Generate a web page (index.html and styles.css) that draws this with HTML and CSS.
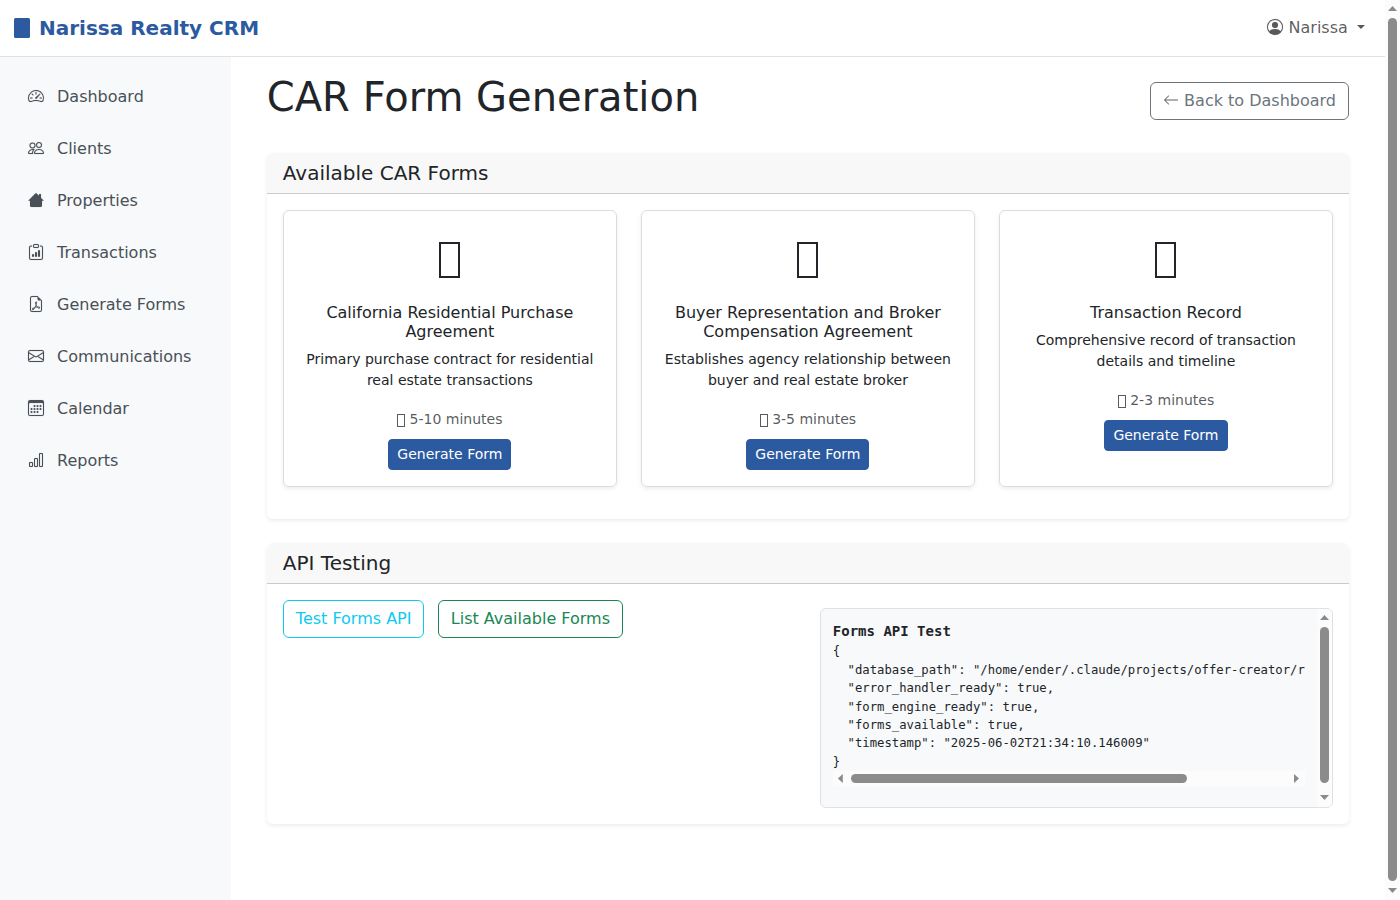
FILE: index.html
```html
<!DOCTYPE html>
<html lang="en">
<head>
<meta charset="utf-8">
<title>CAR Form Generation</title>
<link rel="stylesheet" href="styles.css">
</head>
<body>
<div class="page">
<nav class="navbar">
  <a class="brand"><span class="brand-mark"></span>Narissa Realty CRM</a>
  <a class="user">
    <svg class="bi" viewBox="0 0 16 16"><path d="M11 6a3 3 0 1 1-6 0 3 3 0 0 1 6 0"/><path fill-rule="evenodd" d="M0 8a8 8 0 1 1 16 0A8 8 0 0 1 0 8m8-7a7 7 0 0 0-5.468 11.37C3.242 11.226 4.805 10 8 10s4.757 1.225 5.468 2.37A7 7 0 0 0 8 1"/></svg>
    Narissa <span class="caret"></span>
  </a>
</nav>
<div class="layout">
  <aside class="sidebar">
    <a class="nav-link"><svg class="bi" viewBox="0 0 16 16"><path d="M8 4a.5.5 0 0 1 .5.5V6a.5.5 0 0 1-1 0V4.5A.5.5 0 0 1 8 4M3.732 5.732a.5.5 0 0 1 .707 0l.915.914a.5.5 0 1 1-.708.708l-.914-.915a.5.5 0 0 1 0-.707M2 10a.5.5 0 0 1 .5-.5h1.586a.5.5 0 0 1 0 1H2.5A.5.5 0 0 1 2 10m9.5 0a.5.5 0 0 1 .5-.5h1.5a.5.5 0 0 1 0 1H12a.5.5 0 0 1-.5-.5m.754-4.246a.39.39 0 0 0-.527-.02L7.547 9.31a.91.91 0 1 0 1.302 1.258l3.434-4.297a.39.39 0 0 0-.029-.518z"/><path fill-rule="evenodd" d="M0 10a8 8 0 1 1 15.547 2.661c-.442 1.253-1.845 1.602-2.932 1.25C11.309 13.488 9.475 13 8 13c-1.474 0-3.31.488-4.615.911-1.087.352-2.49.003-2.932-1.25A8 8 0 0 1 0 10m8-7a7 7 0 0 0-6.603 9.329c.203.575.923.876 1.68.63C4.397 12.533 6.358 12 8 12s3.604.532 4.923.96c.757.245 1.477-.056 1.68-.631A7 7 0 0 0 8 3"/></svg>Dashboard</a>
    <a class="nav-link"><svg class="bi" viewBox="0 0 16 16"><path d="M15 14s1 0 1-1-1-4-5-4-5 3-5 4 1 1 1 1zm-7.978-1L7 12.996c.001-.264.167-1.03.76-1.72C8.312 10.629 9.282 10 11 10c1.717 0 2.687.63 3.24 1.276.593.69.758 1.457.76 1.72l-.008.002-.014.002zM11 7a2 2 0 1 0 0-4 2 2 0 0 0 0 4m3-2a3 3 0 1 1-6 0 3 3 0 0 1 6 0M6.936 9.28a6 6 0 0 0-1.23-.247A7 7 0 0 0 5 9c-4 0-5 3-5 4q0 1 1 1h4.216A2.24 2.24 0 0 1 5 13c0-1.01.377-2.042 1.09-2.904.243-.294.526-.569.846-.816M4.92 10A5.5 5.5 0 0 0 4 13H1c0-.26.164-1.03.76-1.724.545-.636 1.492-1.256 3.16-1.275ZM1.5 5.5a3 3 0 1 1 6 0 3 3 0 0 1-6 0m3-2a2 2 0 1 0 0 4 2 2 0 0 0 0-4"/></svg>Clients</a>
    <a class="nav-link"><svg class="bi" viewBox="0 0 16 16"><path d="M8.707 1.5a1 1 0 0 0-1.414 0L.646 8.146a.5.5 0 0 0 .708.708L2 8.4v5.1A1.5 1.5 0 0 0 3.500 15h9a1.500 1.500 0 0 0 1.500-1.500V8.400l.646.454a.5.5 0 0 0 .708-.708L13 5.793V2.500a.5.5 0 0 0-.5-.5h-1a.5.5 0 0 0-.5.5v1.293z"/></svg>Properties</a>
    <a class="nav-link"><svg class="bi" viewBox="0 0 16 16"><path d="M4 11a1 1 0 1 1 2 0v1a1 1 0 1 1-2 0zm6-4a1 1 0 1 1 2 0v5a1 1 0 1 1-2 0zM7 9a1 1 0 0 1 2 0v3a1 1 0 1 1-2 0z"/><path d="M4 1.5H3a2 2 0 0 0-2 2V14a2 2 0 0 0 2 2h10a2 2 0 0 0 2-2V3.500a2 2 0 0 0-2-2h-1v1h1a1 1 0 0 1 1 1V14a1 1 0 0 1-1 1H3a1 1 0 0 1-1-1V3.500a1 1 0 0 1 1-1h1z"/><path d="M9.500 1a.5.5 0 0 1 .5.5v1a.5.5 0 0 1-.5.5h-3a.5.5 0 0 1-.5-.5v-1a.5.5 0 0 1 .5-.5zm-3-1A1.500 1.500 0 0 0 5 1.500v1A1.500 1.500 0 0 0 6.500 4h3A1.500 1.500 0 0 0 11 2.500v-1A1.500 1.500 0 0 0 9.500 0z"/></svg>Transactions</a>
    <a class="nav-link"><svg class="bi" viewBox="0 0 16 16"><path d="M14 14V4.500L9.500 0H4a2 2 0 0 0-2 2v12a2 2 0 0 0 2 2h8a2 2 0 0 0 2-2M9.500 3A1.500 1.500 0 0 0 11 4.500h2V14a1 1 0 0 1-1 1H4a1 1 0 0 1-1-1V2a1 1 0 0 1 1-1h5.500z"/><path d="M4.603 14.087a.8.8 0 0 1-.438-.420c-.195-.388-.130-.776.080-1.102.198-.307.526-.568.897-.787a7.700 7.700 0 0 1 1.482-.645 20 20 0 0 0 1.062-2.227 7.300 7.300 0 0 1-.430-1.295c-.086-.400-.119-.796-.046-1.136.075-.354.274-.672.650-.823.192-.077.400-.120.602-.077a.7.7 0 0 1 .477.365c.088.164.120.356.127.538.007.188-.012.396-.047.614-.084.510-.270 1.134-.520 1.794a11 11 0 0 0 .980 1.686 5.800 5.800 0 0 1 1.334.050c.364.066.734.195.960.465.120.144.193.320.200.518.007.192-.047.382-.138.563a1.040 1.040 0 0 1-.354.416.860.860 0 0 1-.510.138c-.331-.014-.654-.196-.933-.417a5.700 5.700 0 0 1-.911-.950 11.700 11.700 0 0 0-1.997.406 11.300 11.300 0 0 1-1.020 1.510c-.292.350-.609.656-.927.787a.8.8 0 0 1-.580.029m1.379-1.901q-.250.115-.459.238c-.328.194-.541.383-.647.547-.094.145-.096.250-.040.361q.016.032.026.044l.035-.012c.137-.056.355-.235.635-.572a8 8 0 0 0 .450-.606m1.640-1.330a13 13 0 0 1 1.010-.193 12 12 0 0 1-.510-.858 21 21 0 0 1-.500 1.050zm2.446.450q.226.245.435.410c.240.190.407.253.498.256a.100.100 0 0 0 .070-.015.300.300 0 0 0 .094-.125.440.440 0 0 0 .059-.200.100.100 0 0 0-.026-.063c-.052-.062-.200-.152-.518-.209a4 4 0 0 0-.612-.053zM8.078 7.800a7 7 0 0 0 .200-.828q.046-.282.038-.465a.600.600 0 0 0-.032-.198.500.500 0 0 0-.145.040c-.087.035-.158.106-.196.283-.040.192-.030.469.046.822q.036.167.090.346z"/></svg>Generate Forms</a>
    <a class="nav-link"><svg class="bi" viewBox="0 0 16 16"><path d="M0 4a2 2 0 0 1 2-2h12a2 2 0 0 1 2 2v8a2 2 0 0 1-2 2H2a2 2 0 0 1-2-2zm2-1a1 1 0 0 0-1 1v.217l7 4.200 7-4.200V4a1 1 0 0 0-1-1zm13 2.383-4.708 2.825L15 11.105zm-.034 6.876-5.640-3.471L8 9.583l-1.326-.795-5.640 3.470A1 1 0 0 0 2 13h12a1 1 0 0 0 .966-.741M1 11.105l4.708-2.897L1 5.383z"/></svg>Communications</a>
    <a class="nav-link"><svg class="bi" viewBox="0 0 16 16"><path d="M14 0H2a2 2 0 0 0-2 2v12a2 2 0 0 0 2 2h12a2 2 0 0 0 2-2V2a2 2 0 0 0-2-2M1 3.857C1 3.384 1.448 3 2 3h12c.552 0 1 .384 1 .857v10.286c0 .473-.448.857-1 .857H2c-.552 0-1-.384-1-.857z"/><path d="M6.500 7a1 1 0 1 0 0-2 1 1 0 0 0 0 2m3 0a1 1 0 1 0 0-2 1 1 0 0 0 0 2m3 0a1 1 0 1 0 0-2 1 1 0 0 0 0 2m-9 3a1 1 0 1 0 0-2 1 1 0 0 0 0 2m3 0a1 1 0 1 0 0-2 1 1 0 0 0 0 2m3 0a1 1 0 1 0 0-2 1 1 0 0 0 0 2m3 0a1 1 0 1 0 0-2 1 1 0 0 0 0 2m-9 3a1 1 0 1 0 0-2 1 1 0 0 0 0 2m3 0a1 1 0 1 0 0-2 1 1 0 0 0 0 2m3 0a1 1 0 1 0 0-2 1 1 0 0 0 0 2"/></svg>Calendar</a>
    <a class="nav-link"><svg class="bi" viewBox="0 0 16 16"><path d="M4 11H2v3h2zm5-4H7v7h2zm5-5v12h-2V2zm-2-1a1 1 0 0 0-1 1v12a1 1 0 0 0 1 1h2a1 1 0 0 0 1-1V2a1 1 0 0 0-1-1zM6 7a1 1 0 0 1 1-1h2a1 1 0 0 1 1 1v7a1 1 0 0 1-1 1H7a1 1 0 0 1-1-1zm-5 4a1 1 0 0 1 1-1h2a1 1 0 0 1 1 1v3a1 1 0 0 1-1 1H2a1 1 0 0 1-1-1z"/></svg>Reports</a>
  </aside>
  <main class="main">
    <header class="page-head">
      <h1>CAR Form Generation</h1>
      <a class="btn btn-secondary"><svg class="bi" viewBox="0 0 16 16"><path fill-rule="evenodd" d="M15 8a.5.5 0 0 0-.5-.5H2.707l3.147-3.146a.5.5 0 1 0-.708-.708l-4 4a.5.5 0 0 0 0 .708l4 4a.5.5 0 0 0 .708-.708L2.707 8.500H14.500A.5.5 0 0 0 15 8"/></svg> Back to Dashboard</a>
    </header>

    <section class="card">
      <h5 class="card-header">Available CAR Forms</h5>
      <div class="card-body forms">
        <article class="form-card">
          <div class="form-icon"><span class="glyph-box"></span></div>
          <h6>California Residential Purchase Agreement</h6>
          <p class="desc">Primary purchase contract for residential real estate transactions</p>
          <p class="time"><span class="glyph-box small"></span> 5-10 minutes</p>
          <a class="btn btn-primary">Generate Form</a>
        </article>
        <article class="form-card">
          <div class="form-icon"><span class="glyph-box"></span></div>
          <h6>Buyer Representation and Broker Compensation Agreement</h6>
          <p class="desc">Establishes agency relationship between buyer and real estate broker</p>
          <p class="time"><span class="glyph-box small"></span> 3-5 minutes</p>
          <a class="btn btn-primary">Generate Form</a>
        </article>
        <article class="form-card">
          <div class="form-icon"><span class="glyph-box"></span></div>
          <h6>Transaction Record</h6>
          <p class="desc">Comprehensive record of transaction details and timeline</p>
          <p class="time"><span class="glyph-box small"></span> 2-3 minutes</p>
          <a class="btn btn-primary">Generate Form</a>
        </article>
      </div>
    </section>

    <section class="card">
      <h5 class="card-header">API Testing</h5>
      <div class="card-body api">
        <div class="api-actions">
          <a class="btn btn-info">Test Forms API</a>
          <a class="btn btn-success">List Available Forms</a>
        </div>
        <div class="result">
          <div class="result-body">
            <strong>Forms API Test</strong>
            <pre>{
  "database_path": "/home/ender/.claude/projects/offer-creator/r
  "error_handler_ready": true,
  "form_engine_ready": true,
  "forms_available": true,
  "timestamp": "2025-06-02T21:34:10.146009"
}</pre>
            <div class="scroll-x"><i class="arrow left"></i><i class="thumb"></i><i class="arrow right"></i></div>
          </div>
          <div class="scroll-y"><i class="arrow up"></i><i class="thumb"></i><i class="arrow down"></i></div>
        </div>
      </div>
    </section>
  </main>
</div>
</div>
<div class="scroll-y page-scroll"><i class="arrow up"></i><i class="thumb"></i><i class="arrow down"></i></div>
</body>
</html>
```
FILE: styles.css
```css
* { box-sizing: border-box; }
body {
  display: flex;
  height: 100vh;
  margin: 0;
  overflow: hidden;
  background: #fff;
  color: #212529;
  font: 16px/1.5 "DejaVu Sans", sans-serif;
}
h1, h5, h6, p, pre { margin: 0; font-weight: 400; }
.bi { width: 1em; height: 1em; fill: currentColor; stroke: currentColor; stroke-width: .12; vertical-align: -2px; overflow: visible; }

.page { flex: 1; min-width: 0; }
.navbar {
  display: flex;
  align-items: center;
  justify-content: space-between;
  height: 57px;
  padding: 0 20px 0 14px;
  border-bottom: 1px solid #dee2e6;
}
.brand { display: flex; align-items: center; gap: 9px; color: #2c5aa0; font-size: 20px; font-weight: 700; }
.brand-mark { width: 16px; height: 20px; border-radius: 1.5px; background: #2c5aa0; }
.user { color: rgba(0, 0, 0, .65); }
.user .bi { margin-right: .4px; }
.caret {
  display: inline-block;
  margin-left: 4.1px;
  vertical-align: 4px;
  border: 4.8px solid transparent;
  border-top-color: currentColor;
  border-bottom: 0;
}

.layout { display: flex; height: calc(100vh - 57px); }
.sidebar {
  flex: 0 0 16.6667%;
  padding: 16px 12px;
  background: #f8f9fa;
}
.nav-link { display: block; padding: 12px 16px; margin-bottom: 4px; color: #495057; }
.nav-link .bi { margin-right: 13px; }
.main { flex: 1; min-width: 0; padding: 16px 36px; }

.page-head { display: flex; align-items: center; justify-content: space-between; margin-bottom: 24px; }
h1 { margin-bottom: 8px; font-size: 40px; line-height: 48px; }

.btn { display: inline-block; padding: 6px 12px; border: 1px solid; border-radius: 6px; }
.btn-secondary { color: #6c757d; }
.btn-info { color: #0dcaf0; }
.btn-success { color: #198754; }
.btn-primary {
  padding: 4px 8px;
  border-color: #2c5aa0;
  border-radius: 4px;
  background: #2c5aa0;
  color: #fff;
  font-size: 14px;
}

.card { margin-bottom: 24px; border-radius: 6px; box-shadow: 0 2px 4px rgba(0, 0, 0, .075); }
.card-header {
  padding: 8px 16px;
  border-bottom: 1px solid #c9cacb;
  border-radius: 6px 6px 0 0;
  background: #f8f8f8;
  font-size: 20px;
  line-height: 24px;
}
.card-body { padding: 16px; }
.forms { display: grid; grid-template-columns: repeat(3, 1fr); gap: 24px; padding-bottom: 32px; }
.form-card {
  padding: 16px;
  border: 1px solid #dcdddd;
  border-radius: 6px;
  box-shadow: 0 2px 4px rgba(0, 0, 0, .075);
  text-align: center;
}
.form-icon { display: flex; justify-content: center; height: 75.6px; padding-top: 15px; }
.glyph-box { width: 21px; height: 36px; border: 2px solid #212529; }
.glyph-box.small { display: inline-block; width: 8px; height: 13px; border: 1px solid currentColor; vertical-align: -3px; }
h6 { margin-bottom: 8px; font-size: 16px; line-height: 19.2px; }
.desc { margin-bottom: 16px; font-size: 14px; }
.time { margin-bottom: 8px; color: rgba(33, 37, 41, .75); font-size: 14px; line-height: 24px; }

.api { display: flex; }
.api-actions { flex: 0 0 537px; display: flex; align-items: flex-start; gap: 13.3px; }
.result {
  flex: 1;
  display: flex;
  min-width: 0;
  height: 200px;
  margin-top: 8px;
  overflow: hidden;
  border: 1px solid #dee2e6;
  border-radius: 6px;
  background: #f8f9fa;
}
.result-body { flex: 1; min-width: 0; padding: 12px; font: 14px/1.5 "DejaVu Sans Mono", monospace; }
.result strong { display: block; }
.result pre { padding-top: .4px; font: 12.25px/1.5 "DejaVu Sans Mono", monospace; }

/* Scrollbars */
.scroll-x, .scroll-y { display: flex; align-items: center; background: #fcfcfc; }
.scroll-y { flex: 0 0 15px; flex-direction: column; padding: 6px 0 7px; }
.scroll-x { height: 15px; padding: 0 6px 0 5px; }
.thumb { border-radius: 5px; background: #8b8b8b; }
.scroll-y .thumb { width: 9px; height: 156px; margin-top: 7px; }
.page-scroll .thumb { height: auto; flex: 1; margin-bottom: 7px; }
.scroll-x .thumb { width: 336px; height: 9px; margin-left: 8px; }
.arrow { width: 9px; height: 5px; background: #8b8b8b; }
.up { clip-path: polygon(50% 0, 100% 100%, 0 100%); }
.down { margin-top: auto; clip-path: polygon(0 0, 100% 0, 50% 100%); }
.left, .right { width: 5px; height: 9px; }
.left { clip-path: polygon(100% 0, 100% 100%, 0 50%); }
.right { margin-left: auto; clip-path: polygon(0 0, 100% 50%, 0 100%); }
```
